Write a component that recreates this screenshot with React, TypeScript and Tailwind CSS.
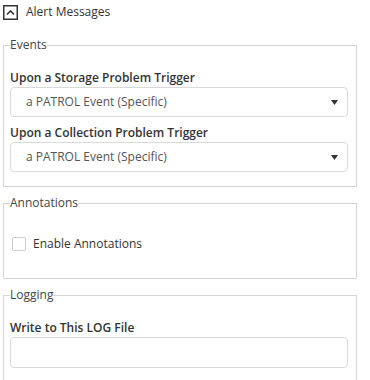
import React from 'react'

function SelectBox({ value }: { value: string }) {
  return (
    <div className="flex h-[30px] w-[338px] items-center justify-between rounded-[4px] border border-[#d9d9d9] bg-white pl-[15px] pr-[9px] text-[12px] text-[#555]">
      <span>{value}</span>
      <svg width="7" height="5" viewBox="0 0 7 5">
        <path d="M0 0h7L3.5 5z" fill="#333" />
      </svg>
    </div>
  )
}

function Label({ children }: { children: React.ReactNode }) {
  return <div className="mb-[1px] text-[12px] font-semibold leading-[16px] text-[#333]">{children}</div>
}

export default function App() {
  return (
    <div className="h-[380px] w-[370px] bg-white pl-[3px] pt-[4px] text-[#333]" style={{ fontFamily: '"Open Sans", sans-serif' }}>
      <div className="flex items-center gap-[8px]">
        <svg width="15" height="15" viewBox="0 0 15 15">
          <rect x="0.75" y="0.75" width="13.5" height="13.5" fill="none" stroke="#333" strokeWidth="1.5" />
          <path d="M4 9.5L7.5 6L11 9.5" fill="none" stroke="#333" strokeWidth="1.6" />
        </svg>
        <span className="text-[12px] leading-[16px] text-[#333]">Alert Messages</span>
      </div>

      <fieldset className="mt-[17px] w-[354px] border border-[#d4d4d4] pb-[14px] pl-[6px]">
        <legend className="text-[12px] leading-[16px] text-[#444]">Events</legend>
        <div className="mt-[17px]">
          <Label>Upon a Storage Problem Trigger</Label>
          <SelectBox value="a PATROL Event (Specific)" />
        </div>
        <div className="mt-[8px]">
          <Label>Upon a Collection Problem Trigger</Label>
          <SelectBox value="a PATROL Event (Specific)" />
        </div>
      </fieldset>

      <fieldset className="mt-[8px] w-[354px] border border-[#d4d4d4] pb-[26px] pl-[6px]">
        <legend className="text-[12px] leading-[16px] text-[#444]">Annotations</legend>
        <div className="ml-[2px] mt-[25px] flex items-center gap-[7px]">
          <div className="h-[14px] w-[14px] rounded-[2px] border border-[#ccc] bg-white" />
          <span className="text-[12px] leading-[16px] text-[#333]">Enable Annotations</span>
        </div>
      </fieldset>

      <fieldset className="mt-[8px] w-[354px] border border-[#d4d4d4] pb-[20px] pl-[6px]">
        <legend className="text-[12px] leading-[16px] text-[#444]">Logging</legend>
        <div className="mt-[17px]">
          <Label>Write to This LOG File</Label>
          <div className="h-[31px] w-[338px] rounded-[4px] border border-[#d9d9d9] bg-white" />
        </div>
      </fieldset>
    </div>
  )
}
